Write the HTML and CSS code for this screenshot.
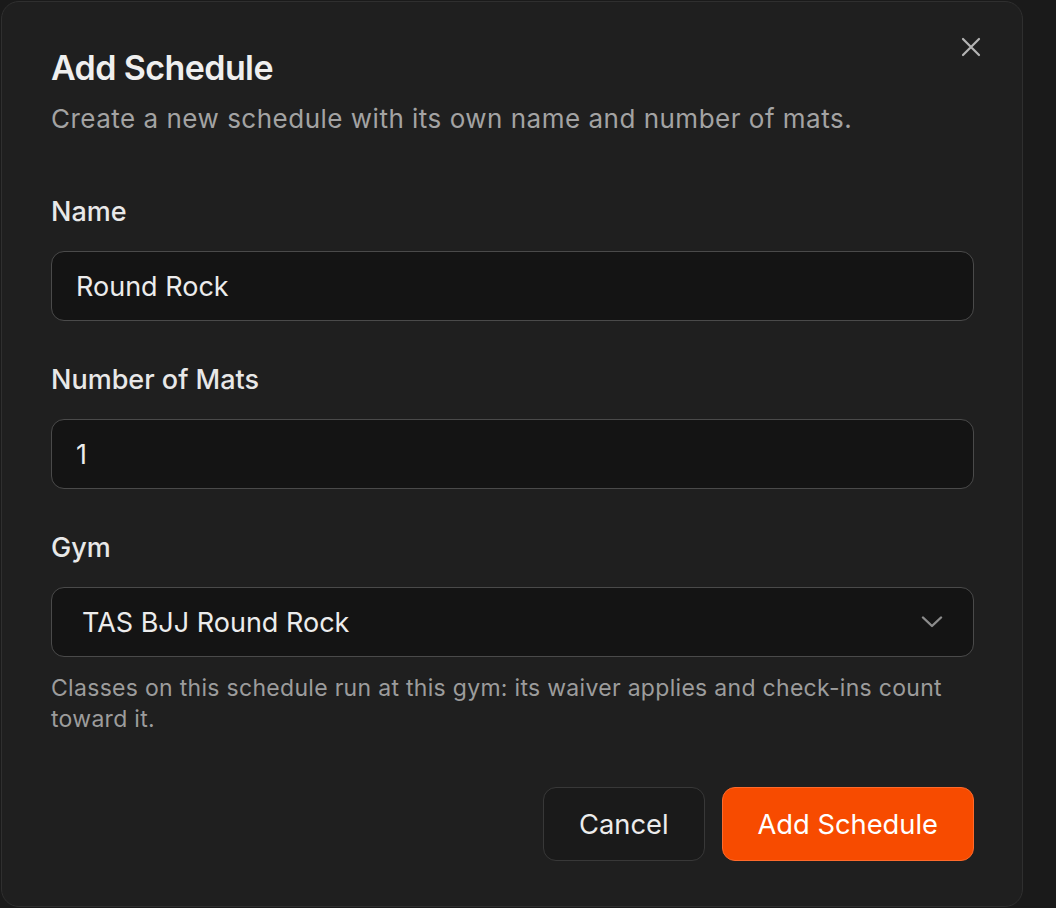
FILE: index.html
```html
<!DOCTYPE html>
<html lang="en">
  <head>
    <meta charset="UTF-8" />
    <meta name="viewport" content="width=device-width, initial-scale=1.0" />
    <title>Add Schedule</title>
    <link rel="stylesheet" href="styles.css">
  </head>
  <body>
    <div class="dialog">
      <button class="close" aria-label="Close">
        <svg width="20" height="20" viewBox="0 0 20 20" fill="none" stroke="currentColor" stroke-width="2.2" stroke-linecap="round">
          <path d="M2 2L18 18M18 2L2 18" />
        </svg>
      </button>
      <div class="dialog-header">
        <h2 class="dialog-title">Add Schedule</h2>
        <p class="dialog-desc">Create a new schedule with its own name and number of mats.</p>
      </div>
      <form class="dialog-form">
        <div class="field">
          <label class="field-label" for="name">Name</label>
          <input class="field-input" id="name" type="text" value="Round Rock" />
        </div>
        <div class="field">
          <label class="field-label" for="mats">Number of Mats</label>
          <input class="field-input" id="mats" type="text" value="1" />
        </div>
        <div class="field">
          <label class="field-label" for="gym">Gym</label>
          <div class="select">
            <span class="select-value">TAS BJJ Round Rock</span>
            <svg class="chevron" width="22" height="12" viewBox="0 0 22 12" fill="none" stroke="currentColor" stroke-width="2.4" stroke-linecap="round" stroke-linejoin="round">
              <path d="M2 1.5L11 10L20 1.5" />
            </svg>
          </div>
          <p class="field-help">Classes on this schedule run at this gym: its waiver applies and check-ins count toward it.</p>
        </div>
        <div class="dialog-footer">
          <button type="button" class="btn btn-outline">Cancel</button>
          <button type="button" class="btn btn-primary">Add Schedule</button>
        </div>
      </form>
    </div>
  </body>
</html>
```

FILE: styles.css
```css
html {
  box-sizing: border-box;
}
*, *::before, *::after {
  box-sizing: inherit;
}
body {
  margin: 0;
  padding: 0;
  background-color: #1a1a1a;
  font-family: Inter, "Noto Sans", Arial, sans-serif;
  color: #ececec;
}
.dialog {
  position: relative;
  width: 1022px;
  height: 906px;
  margin: 1px 0 0 1px;
  padding: 46px 48px 0 49px;
  background-color: #1f1f1f;
  border: 1px solid #2f2f2f;
  border-radius: 18px;
}
.close {
  position: absolute;
  top: 33px;
  right: 39px;
  width: 24px;
  height: 24px;
  padding: 2px;
  border: none;
  background: none;
  color: #b4b4b4;
  cursor: pointer;
}
.dialog-title {
  margin: 0;
  font-size: 34px;
  line-height: 40px;
  font-weight: 600;
  letter-spacing: -0.6px;
  color: #efefef;
}
.dialog-desc {
  margin: 13px 0 0;
  font-size: 26px;
  line-height: 36px;
  letter-spacing: 0.5px;
  color: #a3a3a3;
}
.dialog-form {
  margin-top: 59px;
  display: flex;
  flex-direction: column;
  gap: 43px;
}
.field {
  display: flex;
  flex-direction: column;
}
.field-label {
  font-size: 27px;
  line-height: 32px;
  font-weight: 500;
  color: #e8e8e8;
}
.field-input,
.select {
  margin-top: 23px;
  width: 100%;
  height: 70px;
  border: 1.5px solid #4a4a4a;
  border-radius: 13px;
  background-color: #141414;
  color: #ececec;
  font-family: inherit;
  font-size: 27px;
}
.field-input {
  padding: 0 24px;
  outline: none;
}
.select {
  display: flex;
  align-items: center;
  justify-content: space-between;
  padding: 0 30px 0 30px;
}
.chevron {
  color: #8c8c8c;
}
.field-help {
  margin: 16px 0 0;
  font-size: 23px;
  line-height: 31px;
  letter-spacing: 0.3px;
  color: #9c9c9c;
}
.dialog-footer {
  display: flex;
  justify-content: flex-end;
  gap: 17px;
  margin-top: 9px;
}
.btn {
  height: 74px;
  padding: 0 35px;
  border-radius: 13px;
  font-family: inherit;
  font-size: 27.3px;
  cursor: pointer;
}
.btn-outline {
  background-color: #1a1a1a;
  border: 1.5px solid #383838;
  color: #ececec;
}
.btn-primary {
  background-color: #f74b00;
  border: 1.5px solid #ff6a2b;
  color: #ffffff;
}
```
